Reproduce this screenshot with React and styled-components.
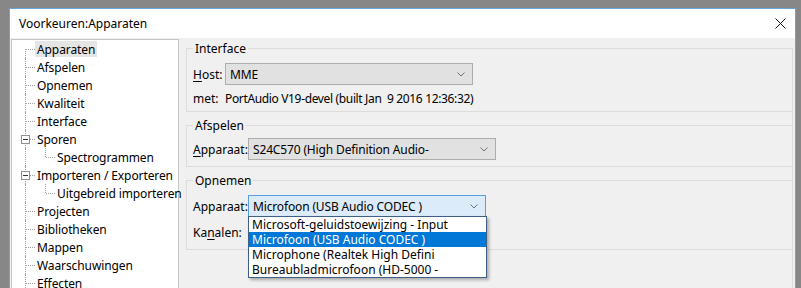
import React from "react";
import styled, { createGlobalStyle } from "styled-components";

const GlobalStyle = createGlobalStyle`
  html, body {
    margin: 0;
    height: 288px;
    overflow: hidden;
    background: #878787;
  }
  body {
    font-family: "Noto Sans", "Open Sans", sans-serif;
    font-size: 12px;
    color: #000;
  }
  * { box-sizing: border-box; }
`;

const treeItems = [
  { label: "Apparaten", selected: true, first: true },
  { label: "Afspelen" },
  { label: "Opnemen" },
  { label: "Kwaliteit" },
  { label: "Interface" },
  { label: "Sporen", expander: true },
  { label: "Spectrogrammen", child: true, lastChild: true },
  { label: "Importeren / Exporteren", expander: true },
  { label: "Uitgebreid importeren", child: true, lastChild: true },
  { label: "Projecten" },
  { label: "Bibliotheken" },
  { label: "Mappen" },
  { label: "Waarschuwingen" },
  { label: "Effecten" },
];

const recordDevices = [
  "Microsoft-geluidstoewijzing - Input",
  "Microfoon (USB Audio CODEC )",
  "Microphone (Realtek High Defini",
  "Bureaubladmicrofoon (HD-5000 -",
];

const Chevron = () => (
  <svg width="8" height="5" viewBox="0 0 8 5">
    <polyline points="0.5,0.5 4,4 7.5,0.5" fill="none" stroke="#707070" strokeWidth="1" />
  </svg>
);

const CloseIcon = () => (
  <svg width="11" height="11" viewBox="0 0 11 11">
    <path d="M0.5 0.5 L10.5 10.5 M10.5 0.5 L0.5 10.5" stroke="#111" strokeWidth="1" />
  </svg>
);

const ComboBox = ({ width, value, active, children }) => (
  <Combo $w={width} $active={active}>
    <ComboText>{value}</ComboText>
    <Chevron />
    {children}
  </Combo>
);

const App = () => {
  return (
    <>
      <GlobalStyle />
      <Window>
        <TitleBar>
          <Title>Voorkeuren:Apparaten</Title>
          <CloseButton>
            <CloseIcon />
          </CloseButton>
        </TitleBar>
        <Body>
          <Tree>
            {treeItems.map((item) => (
              <TreeRow key={item.label}>
                {item.child ? (
                  <>
                    <Trunk $first={false} $plain />
                    <Branch $last={item.lastChild} />
                  </>
                ) : (
                  <Trunk $first={item.first}>
                    {item.expander && <Expander />}
                  </Trunk>
                )}
                <NodeLabel $selected={item.selected}>{item.label}</NodeLabel>
              </TreeRow>
            ))}
          </Tree>

          <Pane>
            <Group $first $gap={0} $pt={7} $pb={5}>
              <Caption>Interface</Caption>
              <FieldRow>
                <FieldLabel $w={32}>
                  <u>H</u>ost:
                </FieldLabel>
                <ComboBox width={248} value="MME" />
              </FieldRow>
              <InfoRow>
                <FieldLabel $w={32}>met:</FieldLabel>
                <InfoText>PortAudio V19-devel (built Jan&nbsp; 9 2016 12:36:32)</InfoText>
              </InfoRow>
            </Group>

            <Group $gap={6} $pt={5} $pb={6}>
              <Caption>Afspelen</Caption>
              <FieldRow>
                <FieldLabel $w={55}>
                  <u>A</u>pparaat:
                </FieldLabel>
                <ComboBox width={248} value="S24C570 (High Definition Audio-" />
              </FieldRow>
            </Group>

            <Group $gap={6} $pt={7} $pb={6}>
              <Caption>Opnemen</Caption>
              <FieldRow>
                <FieldLabel $w={55}>Apparaat:</FieldLabel>
                <ComboBox width={238} value="Microfoon (USB Audio CODEC )" active>
                  <DropList>
                    {recordDevices.map((d) => (
                      <DropItem key={d} $selected={d === "Microfoon (USB Audio CODEC )"}>
                        {d}
                      </DropItem>
                    ))}
                  </DropList>
                </ComboBox>
              </FieldRow>
              <FieldRow $top={4}>
                <FieldLabel $w={55}>
                  Ka<u>n</u>alen:
                </FieldLabel>
              </FieldRow>
            </Group>
          </Pane>
        </Body>
      </Window>
    </>
  );
};

const Window = styled.div`
  margin: 8px 0 0 9px;
  width: 787px;
  height: 290px;
  border: 1px solid #6aa5d9;
  border-bottom: none;
  background: #f0f0f0;
  display: flex;
  flex-direction: column;
`;

const TitleBar = styled.div`
  height: 29px;
  background: #fff;
  display: flex;
  align-items: center;
  justify-content: space-between;
  padding-left: 9px;
  flex-shrink: 0;
`;

const Title = styled.span`
  font-size: 12px;
  color: #000;
`;

const CloseButton = styled.div`
  width: 30px;
  height: 29px;
  display: flex;
  align-items: center;
  justify-content: center;
`;

const Body = styled.div`
  flex: 1;
  display: flex;
  align-items: flex-start;
  padding-top: 1px;
`;

const Tree = styled.div`
  margin-left: 1px;
  width: 168px;
  height: 260px;
  background: #fff;
  border: 1px solid #c6c6c6;
  border-bottom: none;
  flex-shrink: 0;
`;

const TreeRow = styled.div`
  height: 18px;
  display: flex;
  align-items: stretch;
`;

const Trunk = styled.span`
  position: relative;
  width: ${(p) => (p.$plain ? 20 : 23)}px;
  flex-shrink: 0;

  &::before {
    content: "";
    position: absolute;
    left: 13px;
    top: ${(p) => (p.$first ? "9px" : "0")};
    bottom: 0;
    border-left: 1px dotted #a0a0a0;
  }

  &::after {
    content: ${(p) => (p.$plain ? "none" : '""')};
    position: absolute;
    left: 14px;
    right: 0;
    top: 9px;
    border-top: 1px dotted #a0a0a0;
  }
`;

const Branch = styled.span`
  position: relative;
  width: 23px;
  flex-shrink: 0;

  &::before {
    content: "";
    position: absolute;
    left: 13px;
    top: 0;
    bottom: ${(p) => (p.$last ? "9px" : "0")};
    border-left: 1px dotted #a0a0a0;
  }

  &::after {
    content: "";
    position: absolute;
    left: 14px;
    right: 0;
    top: 9px;
    border-top: 1px dotted #a0a0a0;
  }
`;

const Expander = styled.span`
  position: absolute;
  left: 9px;
  top: 5px;
  width: 9px;
  height: 9px;
  border: 1px solid #919191;
  background: #fff;
  z-index: 1;

  &::after {
    content: "";
    position: absolute;
    left: 1px;
    right: 1px;
    top: 3px;
    border-top: 1px solid #333;
  }
`;

const NodeLabel = styled.span`
  align-self: center;
  padding: 1px 2px 0;
  height: 16px;
  line-height: 16px;
  white-space: nowrap;
  letter-spacing: -0.1px;
  background: ${(p) => (p.$selected ? "#e5e5e5" : "transparent")};
`;

const Pane = styled.div`
  flex: 1;
  margin: 9px 2px 0 0;
  padding-left: 7px;
  height: 260px;
  border-right: 1px solid #dcdcdc;
`;

const Group = styled.fieldset`
  margin: ${(p) => (p.$first ? "-7px" : `${p.$gap}px`)} 0 0 0;
  padding: ${(p) => p.$pt}px 0 ${(p) => p.$pb}px 6px;
  border: 1px solid #dcdcdc;
  border-right: none;
  min-width: 0;
`;

const Caption = styled.legend`
  padding: 0 2px;
  line-height: 15px;
  font-size: 12px;
`;

const FieldRow = styled.div`
  display: flex;
  align-items: center;
  height: 22px;
  margin-top: ${(p) => p.$top || 0}px;
`;

const InfoRow = styled.div`
  display: flex;
  align-items: center;
  line-height: 15px;
  margin-top: 6px;
  white-space: nowrap;
`;

const InfoText = styled.span`
  letter-spacing: -0.35px;
`;

const FieldLabel = styled.span`
  width: ${(p) => p.$w}px;
  flex-shrink: 0;
  white-space: nowrap;

  u {
    text-decoration-thickness: 1px;
    text-underline-offset: 2px;
  }
`;

const Combo = styled.div`
  position: relative;
  width: ${(p) => p.$w}px;
  height: 22px;
  border: 1px solid ${(p) => (p.$active ? "#569de5" : "#adadad")};
  background: ${(p) => (p.$active ? "#dcebf9" : "#e1e1e1")};
  display: flex;
  align-items: center;
  justify-content: space-between;
  padding: 0 7px 0 4px;
`;

const ComboText = styled.span`
  white-space: nowrap;
  letter-spacing: -0.15px;
`;

const DropList = styled.div`
  position: absolute;
  top: 100%;
  left: -1px;
  width: 239px;
  background: #fff;
  border: 1px solid #3f5f86;
  box-shadow: 2px 2px 3px rgba(0, 0, 0, 0.3);
  z-index: 2;
`;

const DropItem = styled.div`
  height: 15px;
  line-height: 15px;
  padding-left: 3px;
  white-space: nowrap;
  background: ${(p) => (p.$selected ? "#0078d7" : "#fff")};
  color: ${(p) => (p.$selected ? "#fff" : "#000")};
`;

export default App;
